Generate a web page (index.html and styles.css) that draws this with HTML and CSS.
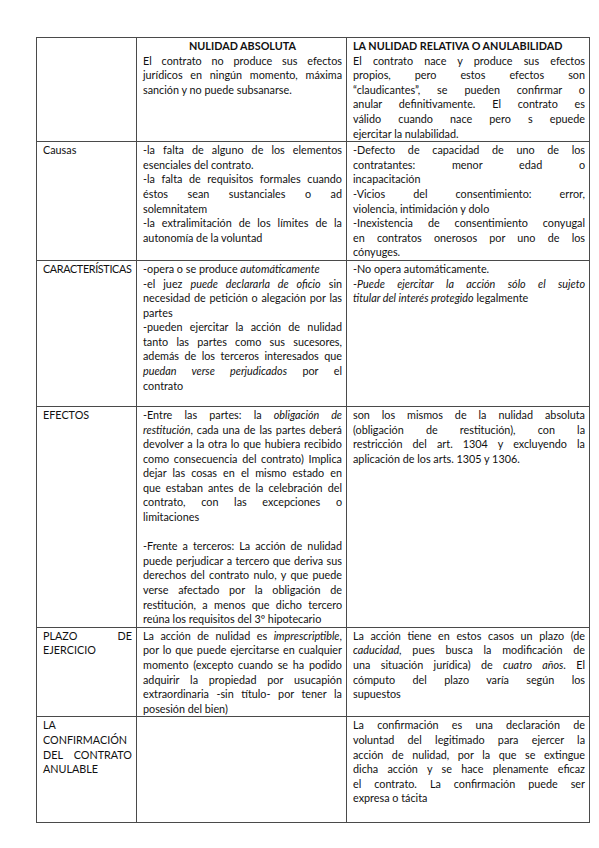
FILE: index.html
```html
<!DOCTYPE html>
<html lang="es">
<head>
<meta charset="utf-8">
<title>Nulidad</title>
<link rel="stylesheet" href="styles.css">
</head>
<body>
<table class="tbl">
  <colgroup><col class="c1"><col class="c2"><col class="c3"></colgroup>
  <tr class="r-head">
    <td></td>
    <td>
      <span class="ln center b">NULIDAD ABSOLUTA</span>
      <span class="ln">El contrato no produce sus efectos</span>
      <span class="ln">jurídicos en ningún momento, máxima</span>
      <span class="ln e">sanción y no puede subsanarse.</span>
    </td>
    <td>
      <span class="ln e b">LA NULIDAD RELATIVA O ANULABILIDAD</span>
      <span class="ln">El contrato nace y produce sus efectos</span>
      <span class="ln">propios, pero estos efectos son</span>
      <span class="ln">“claudicantes”, se pueden confirmar o</span>
      <span class="ln">anular definitivamente. El contrato es</span>
      <span class="ln">válido cuando nace pero s epuede</span>
      <span class="ln e">ejercitar la nulabilidad.</span>
    </td>
  </tr>
  <tr class="r-causas">
    <td><span class="ln e">Causas</span></td>
    <td>
      <span class="ln">-la falta de alguno de los elementos</span>
      <span class="ln e">esenciales del contrato.</span>
      <span class="ln">-la falta de requisitos formales cuando</span>
      <span class="ln">éstos sean sustanciales o ad</span>
      <span class="ln e">solemnitatem</span>
      <span class="ln">-la extralimitación de los límites de la</span>
      <span class="ln e">autonomía de la voluntad</span>
    </td>
    <td>
      <span class="ln">-Defecto de capacidad de uno de los</span>
      <span class="ln">contratantes: menor edad o</span>
      <span class="ln e">incapacitación</span>
      <span class="ln">-Vicios del consentimiento: error,</span>
      <span class="ln e">violencia, intimidación y dolo</span>
      <span class="ln">-Inexistencia de consentimiento conyugal</span>
      <span class="ln">en contratos onerosos por uno de los</span>
      <span class="ln e">cónyuges.</span>
    </td>
  </tr>
  <tr class="r-carac">
    <td><span class="ln e tight">CARACTERÍSTICAS</span></td>
    <td>
      <span class="ln e">-opera o se produce <em>automáticamente</em></span>
      <span class="ln">-el juez <em>puede declararla de oficio</em> sin</span>
      <span class="ln">necesidad de petición o alegación por las</span>
      <span class="ln e">partes</span>
      <span class="ln">-pueden ejercitar la acción de nulidad</span>
      <span class="ln">tanto las partes como sus sucesores,</span>
      <span class="ln">además de los terceros interesados que</span>
      <span class="ln"><em>puedan verse perjudicados</em> por el</span>
      <span class="ln e">contrato</span>
    </td>
    <td>
      <span class="ln e">-No opera automáticamente.</span>
      <span class="ln">-<em>Puede ejercitar la acción sólo el sujeto</em></span>
      <span class="ln e"><em>titular del interés protegido</em> legalmente</span>
    </td>
  </tr>
  <tr class="r-efectos">
    <td><span class="ln e">EFECTOS</span></td>
    <td>
      <span class="ln">-Entre las partes: la <em>obligación de</em></span>
      <span class="ln"><em>restitución</em>, cada una de las partes deberá</span>
      <span class="ln">devolver a la otra lo que hubiera recibido</span>
      <span class="ln">como consecuencia del contrato) Implica</span>
      <span class="ln">dejar las cosas en el mismo estado en</span>
      <span class="ln">que estaban antes de la celebración del</span>
      <span class="ln">contrato, con las excepciones o</span>
      <span class="ln e">limitaciones</span>
      <span class="ln e">&nbsp;</span>
      <span class="ln">-Frente a terceros: La acción de nulidad</span>
      <span class="ln">puede perjudicar a tercero que deriva sus</span>
      <span class="ln">derechos del contrato nulo, y que puede</span>
      <span class="ln">verse afectado por la obligación de</span>
      <span class="ln">restitución, a menos que dicho tercero</span>
      <span class="ln e">reúna los requisitos del 3º hipotecario</span>
    </td>
    <td>
      <span class="ln">son los mismos de la nulidad absoluta</span>
      <span class="ln">(obligación de restitución), con la</span>
      <span class="ln">restricción del art. 1304 y excluyendo la</span>
      <span class="ln e">aplicación de los arts. 1305 y 1306.</span>
    </td>
  </tr>
  <tr class="r-plazo">
    <td>
      <span class="ln">PLAZO DE</span>
      <span class="ln e">EJERCICIO</span>
    </td>
    <td>
      <span class="ln">La acción de nulidad es <em>imprescriptible</em>,</span>
      <span class="ln">por lo que puede ejercitarse en cualquier</span>
      <span class="ln">momento (excepto cuando se ha podido</span>
      <span class="ln">adquirir la propiedad por usucapión</span>
      <span class="ln">extraordinaria -sin título- por tener la</span>
      <span class="ln e">posesión del bien)</span>
    </td>
    <td>
      <span class="ln">La acción tiene en estos casos un plazo (de</span>
      <span class="ln"><em>caducidad</em>, pues busca la modificación de</span>
      <span class="ln">una situación jurídica) de <em>cuatro años</em>. El</span>
      <span class="ln">cómputo del plazo varía según los</span>
      <span class="ln e">supuestos</span>
    </td>
  </tr>
  <tr class="r-conf">
    <td>
      <span class="ln e">LA</span>
      <span class="ln e">CONFIRMACIÓN</span>
      <span class="ln">DEL CONTRATO</span>
      <span class="ln e">ANULABLE</span>
    </td>
    <td></td>
    <td>
      <span class="ln">La confirmación es una declaración de</span>
      <span class="ln">voluntad del legitimado para ejercer la</span>
      <span class="ln">acción de nulidad, por la que se extingue</span>
      <span class="ln">dicha acción y se hace plenamente eficaz</span>
      <span class="ln">el contrato. La confirmación puede ser</span>
      <span class="ln e">expresa o tácita</span>
    </td>
  </tr>
</table>
</body>
</html>
```

FILE: styles.css
```css
html, body {
  margin: 0;
  padding: 0;
  background: #ffffff;
}

body {
  padding: 37px 0 0 36px;
  font-family: "Lato", "Liberation Sans", sans-serif;
  font-size: 10.8px;
  color: #111111;
}

.tbl {
  border-collapse: collapse;
  table-layout: fixed;
  width: 553px;
}

.c1 { width: 100px; }
.c2 { width: 210px; }
.c3 { width: 243px; }

.tbl td {
  border: 1px solid #4a4a4a;
  vertical-align: top;
  padding: 1px 4px 0 6px;
  line-height: 14.6px;
}

.ln {
  display: block;
  text-align: justify;
  text-align-last: justify;
  white-space: nowrap;
}

.ln.e {
  text-align: left;
  text-align-last: left;
}

.ln.center {
  text-align: center;
  text-align-last: center;
}

.tight { letter-spacing: -0.35px; }

.b { font-weight: 700; }

em { font-style: italic; }

.r-head { height: 103px; }
.r-causas { height: 116px; }
.r-carac { height: 146px; }
.r-efectos { height: 208px; }
.r-plazo { height: 87px; }
.r-conf { height: 106px; }
```
